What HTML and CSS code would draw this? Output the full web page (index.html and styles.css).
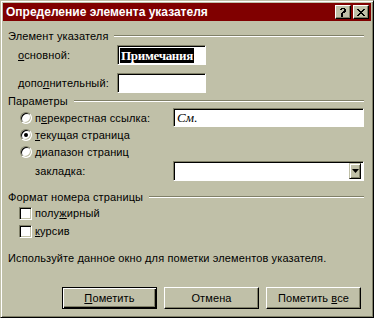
FILE: index.html
```html
<!DOCTYPE html>
<html lang="ru">
<head>
    <meta charset="UTF-8">
    <title>Определение элемента указателя</title>
    <link rel="stylesheet" href="styles.css">
</head>
<body>
    <div class="window">
        <!-- Заголовок окна -->
        <div class="titlebar">
            <span class="title">Определение элемента указателя</span>
            <div class="caption-buttons">
                <span class="cap-btn">
                    <svg width="8" height="9" viewBox="0 0 8 9">
                        <path d="M1 1h1v-1h4v1h1v3h-1v1h-2v2h-2v-2h1v-1h1v-1h1v-2h-2v1h-2z M2 7h2v2h-2z" fill="#000"/>
                    </svg>
                </span>
                <span class="cap-btn">
                    <svg width="8" height="7" viewBox="0 0 8 7">
                        <path d="M0 0h2v1h1v1h2v-1h1v-1h2v1h-1v1h-1v1h-1v1h1v1h1v1h1v1h-2v-1h-1v-1h-2v1h-1v1h-2v-1h1v-1h1v-1h1v-1h-1v-1h-1v-1h-1z" fill="#000"/>
                    </svg>
                </span>
            </div>
        </div>

        <div class="content">
            <!-- Элемент указателя -->
            <div class="group-head first"><span>Элемент указателя</span><i class="etch"></i></div>
            <div class="field-row">
                <span class="lbl"><u>о</u>сновной:</span>
                <div class="edit"><span class="sel">Примечания</span></div>
            </div>
            <div class="field-row second">
                <span class="lbl">допо<u>л</u>нительный:</span>
                <div class="edit"></div>
            </div>

            <!-- Параметры -->
            <div class="group-head"><span>Параметры</span><i class="etch"></i></div>
            <div class="opt-row first-opt">
                <span class="choice"><i class="radio"></i><span>п<u>е</u>рекрестная ссылка:</span></span>
                <div class="edit wide"><span class="see">См.</span></div>
            </div>
            <div class="opt-row">
                <span class="choice"><i class="radio checked"></i><span><u>т</u>екущая страница</span></span>
            </div>
            <div class="opt-row">
                <span class="choice"><i class="radio"></i><span><u>д</u>иапазон страниц</span></span>
            </div>
            <div class="opt-row combo-row">
                <span class="choice plain">закладка:</span>
                <div class="edit wide combo">
                    <span class="drop-btn">
                        <svg width="7" height="4" viewBox="0 0 7 4"><path d="M0 0h7l-3.5 4z" fill="#000"/></svg>
                    </span>
                </div>
            </div>

            <!-- Формат номера страницы -->
            <div class="group-head third"><span>Формат номера страницы</span><i class="etch"></i></div>
            <div class="check-row"><i class="checkbox"></i><span>полу<u>ж</u>ирный</span></div>
            <div class="check-row"><i class="checkbox"></i><span><u>к</u>урсив</span></div>

            <p class="hint">Используйте данное окно для пометки элементов указателя.</p>

            <div class="buttons">
                <span class="btn default"><span><u>П</u>ометить</span></span>
                <span class="btn"><span>Отмена</span></span>
                <span class="btn"><span>Пометить <u>в</u>се</span></span>
            </div>
        </div>
    </div>
</body>
</html>
```

FILE: styles.css
```css
body {
    margin: 0;
    background-color: #c0c0a8;
    font-family: 'Liberation Sans', Arial, sans-serif;
    font-size: 11px;
    color: #000;
}
.window {
    width: 374px;
    height: 318px;
    box-sizing: border-box;
    border: 1px solid;
    border-color: #c0c0a8 #000 #000 #c0c0a8;
    box-shadow: inset 1px 1px #fff, inset -1px -1px #808068;
    padding: 2px;
    background-color: #c0c0a8;
}
u {
    text-decoration-thickness: 1px;
    text-underline-offset: 1px;
}

/* заголовок */
.titlebar {
    height: 18px;
    background-color: #800000;
    display: flex;
    align-items: center;
    justify-content: space-between;
    padding: 0 2px 0 3px;
}
.title {
    color: #fff;
    font-weight: bold;
    font-size: 12px;
}
.caption-buttons {
    display: flex;
    gap: 2px;
}
.cap-btn {
    width: 16px;
    height: 14px;
    box-sizing: border-box;
    background-color: #c0c0a8;
    border: 1px solid;
    border-color: #fff #000 #000 #fff;
    box-shadow: inset -1px -1px #808068;
    display: flex;
    align-items: center;
    justify-content: center;
}

/* содержимое */
.content {
    padding: 0 5px;
    letter-spacing: 0.12px;
}
.group-head {
    display: flex;
    align-items: center;
    height: 14px;
    margin-top: 1px;
}
.group-head.first {
    margin-top: 8px;
}
.group-head.third {
    margin-top: 9px;
}
.group-head span {
    padding-right: 6px;
}
.etch {
    flex: 1;
    height: 1px;
    background-color: #808068;
    border-bottom: 1px solid #fff;
    margin-right: 2px;
}

.field-row {
    display: grid;
    grid-template-columns: 109px 89px;
    align-items: center;
    height: 20px;
    margin-top: 2px;
}
.field-row.second {
    margin-top: 8px;
}
.lbl {
    padding-left: 10px;
}
.edit {
    height: 20px;
    box-sizing: border-box;
    background-color: #fff;
    border: 1px solid;
    border-color: #808068 #fff #fff #808068;
    box-shadow: inset 1px 1px #000;
    display: flex;
    align-items: center;
    padding-left: 2px;
}
.sel {
    background-color: #000;
    color: #fff;
    font-family: 'Liberation Serif', 'Times New Roman', serif;
    font-weight: bold;
    font-size: 13px;
    line-height: 15px;
    letter-spacing: -0.3px;
    padding: 0 1px;
}
.see {
    font-family: 'Liberation Serif', 'Times New Roman', serif;
    font-style: italic;
    font-size: 13px;
    padding-left: 1px;
}

.opt-row {
    display: grid;
    grid-template-columns: 165px 191px;
    align-items: center;
    height: 17px;
}
.opt-row.first-opt {
    height: 18px;
}
.combo-row {
    height: 20px;
    margin-top: 1px;
}
.choice {
    display: flex;
    align-items: center;
    padding-left: 12px;
}
.choice.plain {
    padding-left: 27px;
}
.edit.wide {
    height: 19px;
}
.edit.combo {
    height: 20px;
    justify-content: flex-end;
    padding: 2px;
}
.drop-btn {
    width: 12px;
    height: 16px;
    box-sizing: border-box;
    background-color: #c0c0a8;
    border: 1px solid;
    border-color: #c0c0a8 #000 #000 #c0c0a8;
    box-shadow: inset 1px 1px #fff, inset -1px -1px #808068;
    display: flex;
    align-items: center;
    justify-content: center;
}

.radio {
    width: 12px;
    height: 12px;
    box-sizing: border-box;
    border-radius: 50%;
    background-color: #fff;
    border: 1px solid;
    border-color: #808068 #fff #fff #808068;
    box-shadow: inset 1px 1px #000, inset -1px -1px #c0c0a8;
    margin-right: 3px;
    position: relative;
}
.radio.checked::after {
    content: "";
    position: absolute;
    left: 3px;
    top: 3px;
    width: 4px;
    height: 4px;
    border-radius: 50%;
    background-color: #000;
}

.check-row {
    display: flex;
    align-items: center;
    height: 18px;
    padding-left: 11px;
}
.check-row:first-of-type {
    margin-top: 2px;
}
.checkbox {
    width: 13px;
    height: 13px;
    box-sizing: border-box;
    background-color: #fff;
    border: 1px solid;
    border-color: #808068 #fff #fff #808068;
    box-shadow: inset 1px 1px #000, inset -1px -1px #c0c0a8;
    margin-right: 3px;
}

.hint {
    margin: 11px 0 0;
    height: 14px;
    line-height: 14px;
}

.buttons {
    display: flex;
    justify-content: flex-end;
    gap: 7px;
    margin-top: 22px;
    padding-right: 5px;
}
.btn {
    width: 95px;
    height: 22px;
    box-sizing: border-box;
    border: 1px solid;
    border-color: #fff #000 #000 #fff;
    box-shadow: inset -1px -1px #808068;
    display: flex;
    align-items: center;
    justify-content: center;
}
.btn.default {
    border: 1px solid #000;
    box-shadow: inset 1px 1px #fff, inset -1px -1px #000, inset -2px -2px #808068;
}
```
